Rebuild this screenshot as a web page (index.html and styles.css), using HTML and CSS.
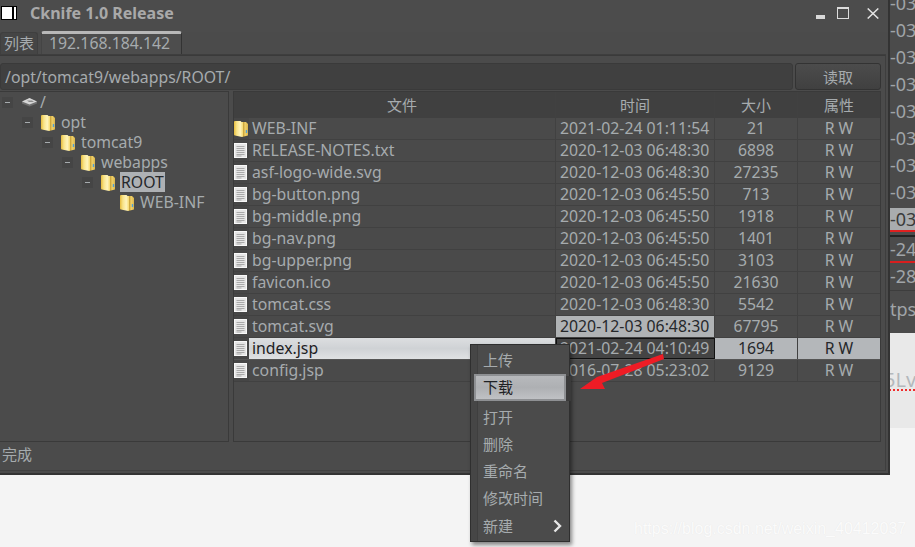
FILE: index.html
```html
<!DOCTYPE html>
<html lang="zh">
<head>
<meta charset="utf-8">
<title>Cknife 1.0 Release</title>
<link rel="stylesheet" href="styles.css">
</head>
<body>
<svg class="defs" width="0" height="0" aria-hidden="true">
  <defs>
    <linearGradient id="foldfill" x1="0" y1="0" x2="1" y2="0">
      <stop offset="0" stop-color="#e6bc3e"/>
      <stop offset=".2" stop-color="#f8e388"/>
      <stop offset=".45" stop-color="#fff4bd"/>
      <stop offset=".62" stop-color="#f7dd78"/>
      <stop offset=".66" stop-color="#c9a23a"/>
      <stop offset=".8" stop-color="#efd06a"/>
      <stop offset="1" stop-color="#dcb64c"/>
    </linearGradient>
    <symbol id="folder" viewBox="0 0 14 17">
      <path d="M1 1h5.500l1 1H12l2 2v11.500L8 17l-7-1.500Q0 15.300 0 14.500V2q0-1 1-1z" fill="url(#foldfill)"/>
      <path d="M11.800 10h1.400v3h-1.400z" fill="#4f9fd8"/>
    </symbol>
    <symbol id="doc" viewBox="0 0 13 15">
      <rect width="13" height="15" fill="#e6e6e6"/>
      <rect x=".5" y=".5" width="12" height="14" fill="none" stroke="#f8f8f8"/>
      <path d="M2.500 3.500h8M2.500 5.500h8M2.500 7.500h8M2.500 9.500h8M2.500 11.500h8M2.500 13h5" stroke="#aaaaaa" fill="none"/>
    </symbol>
    <symbol id="disk" viewBox="0 0 17 10">
      <path d="M8.500 1L16 4.500v2L8.500 9.500 1 6.500v-2z" fill="#6f6f6f"/>
      <path d="M8.500 1L16 4.500 8.500 7.500 1 4.500z" fill="#d6d6d6"/>
      <path d="M6 3.500h5l2 1.500H8z" fill="#8b8b8b"/>
    </symbol>
  </defs>
</svg>

<div class="behind">
  <div class="dump">
    <div class="dump-line dl-0">-03</div>
    <div class="dump-line">-03</div>
    <div class="dump-line">-03</div>
    <div class="dump-line">-03</div>
    <div class="dump-line">-03</div>
    <div class="dump-line">-03</div>
    <div class="dump-line">-03</div>
    <div class="dump-line">-03</div>
    <div class="dump-line dl-hl">-03</div>
    <div class="dump-line dl-red">-24</div>
    <div class="dump-line">-28</div>
    <div class="dump-tps">tps:</div>
  </div>
  <div class="page-white"><span class="squiggle">5Lv5</span></div>
</div>

<section class="window">
  <header class="titlebar">
    <span class="app-icon"></span>
    <span class="title">Cknife 1.0 Release</span>
    <span class="win-ctl">
      <svg class="ctl-min" width="9" height="4" viewBox="0 0 9 4"><rect width="9" height="4" fill="#d8d8d8"/></svg>
      <svg class="ctl-max" width="12" height="12" viewBox="0 0 12 12"><rect x=".5" y=".5" width="11" height="11" fill="none" stroke="#dcdcdc"/><rect x=".5" y=".5" width="11" height="1.500" fill="#dcdcdc"/></svg>
      <svg class="ctl-close" width="12" height="11" viewBox="0 0 12 11"><path d="M.7.5l10.600 10M11.300.5L.7 10.500" stroke="#e4e4e4" stroke-width="1.500" fill="none"/></svg>
    </span>
  </header>

  <nav class="tabs">
    <span class="tab">列表</span>
    <span class="tab active">192.168.184.142</span>
  </nav>

  <div class="tabpanel">
    <div class="address">
      <div class="path">/opt/tomcat9/webapps/ROOT/</div>
      <button class="read">读取</button>
    </div>
    <div class="split">
      <aside class="tree">
        <div class="node d0"><span class="tog"></span><svg class="ic-disk"><use href="#disk"/></svg><span class="label">/</span></div>
        <div class="node d1"><span class="tog"></span><svg class="ic-fold"><use href="#folder"/></svg><span class="label">opt</span></div>
        <div class="node d2"><span class="tog"></span><svg class="ic-fold"><use href="#folder"/></svg><span class="label">tomcat9</span></div>
        <div class="node d3"><span class="tog"></span><svg class="ic-fold"><use href="#folder"/></svg><span class="label">webapps</span></div>
        <div class="node d4"><span class="tog"></span><svg class="ic-fold"><use href="#folder"/></svg><span class="label sel">ROOT</span></div>
        <div class="node d5"><svg class="ic-fold"><use href="#folder"/></svg><span class="label">WEB-INF</span></div>
      </aside>
      <div class="table">
        <div class="row head"><span class="c-ic"></span><span class="c-name">文件</span><span class="c-time">时间</span><span class="c-size">大小</span><span class="c-attr">属性</span></div>
        <div class="row"><span class="c-ic"><svg class="t-fold"><use href="#folder"/></svg></span><span class="c-name">WEB-INF</span><span class="c-time">2021-02-24 01:11:54</span><span class="c-size">21</span><span class="c-attr">R W</span></div>
        <div class="row"><span class="c-ic"><svg class="t-doc"><use href="#doc"/></svg></span><span class="c-name">RELEASE-NOTES.txt</span><span class="c-time">2020-12-03 06:48:30</span><span class="c-size">6898</span><span class="c-attr">R W</span></div>
        <div class="row"><span class="c-ic"><svg class="t-doc"><use href="#doc"/></svg></span><span class="c-name">asf-logo-wide.svg</span><span class="c-time">2020-12-03 06:48:30</span><span class="c-size">27235</span><span class="c-attr">R W</span></div>
        <div class="row"><span class="c-ic"><svg class="t-doc"><use href="#doc"/></svg></span><span class="c-name">bg-button.png</span><span class="c-time">2020-12-03 06:45:50</span><span class="c-size">713</span><span class="c-attr">R W</span></div>
        <div class="row"><span class="c-ic"><svg class="t-doc"><use href="#doc"/></svg></span><span class="c-name">bg-middle.png</span><span class="c-time">2020-12-03 06:45:50</span><span class="c-size">1918</span><span class="c-attr">R W</span></div>
        <div class="row"><span class="c-ic"><svg class="t-doc"><use href="#doc"/></svg></span><span class="c-name">bg-nav.png</span><span class="c-time">2020-12-03 06:45:50</span><span class="c-size">1401</span><span class="c-attr">R W</span></div>
        <div class="row"><span class="c-ic"><svg class="t-doc"><use href="#doc"/></svg></span><span class="c-name">bg-upper.png</span><span class="c-time">2020-12-03 06:45:50</span><span class="c-size">3103</span><span class="c-attr">R W</span></div>
        <div class="row"><span class="c-ic"><svg class="t-doc"><use href="#doc"/></svg></span><span class="c-name">favicon.ico</span><span class="c-time">2020-12-03 06:45:50</span><span class="c-size">21630</span><span class="c-attr">R W</span></div>
        <div class="row"><span class="c-ic"><svg class="t-doc"><use href="#doc"/></svg></span><span class="c-name">tomcat.css</span><span class="c-time">2020-12-03 06:48:30</span><span class="c-size">5542</span><span class="c-attr">R W</span></div>
        <div class="row"><span class="c-ic"><svg class="t-doc"><use href="#doc"/></svg></span><span class="c-name">tomcat.svg</span><span class="c-time hover">2020-12-03 06:48:30</span><span class="c-size">67795</span><span class="c-attr">R W</span></div>
        <div class="row selected"><span class="c-ic"><svg class="t-doc"><use href="#doc"/></svg></span><span class="c-name">index.jsp</span><span class="c-time focus">2021-02-24 04:10:49</span><span class="c-size">1694</span><span class="c-attr">R W</span></div>
        <div class="row"><span class="c-ic"><svg class="t-doc"><use href="#doc"/></svg></span><span class="c-name">config.jsp</span><span class="c-time">2016-07-28 05:23:02</span><span class="c-size">9129</span><span class="c-attr">R W</span></div>
      </div>
    </div>
  </div>
  <footer class="status">完成</footer>
</section>

<ul class="menu">
  <li class="mi">上传</li>
  <li class="mi active">下载</li>
  <li class="mi gap">打开</li>
  <li class="mi">删除</li>
  <li class="mi">重命名</li>
  <li class="mi">修改时间</li>
  <li class="mi sub">新建<svg width="9" height="14" viewBox="0 0 9 14"><path d="M1.500 1.500L7 7l-5.500 5.500" fill="none" stroke="#e6e6e6" stroke-width="2.400"/></svg></li>
</ul>

<svg class="arrow" width="90" height="42" viewBox="0 0 90 42">
  <path d="M2 36L19 24 85 1l1 5-62 24 3 6z" fill="#ee1c25"/>
</svg>

<div class="watermark">https://blog.csdn.net/weixin_40412037</div>
</body>
</html>
```
FILE: styles.css
```css
* { box-sizing: border-box; }
html, body { margin: 0; height: 100%; }
body {
  position: relative;
  width: 915px;
  height: 547px;
  overflow: hidden;
  background: #f4f4f4;
  font-family: "Noto Sans", "Noto Sans CJK SC", sans-serif;
  font-size: 15.800px;
  color: #a6abae;
}
.defs { position: absolute; }

/* what is visible behind the window */
.behind {
  position: absolute;
  left: 889px;
  top: 0;
  width: 26px;
  height: 428px;
  overflow: hidden;
  display: flex;
  flex-direction: column;
}
.dump {
  height: 333px;
  background: #4b4b4b;
  font-size: 18px;
  color: #a0a4a8;
  flex: none;
}
.dump-line {
  height: 27px;
  line-height: 27px;
  white-space: nowrap;
  padding-left: 1px;
}
.dl-0 { margin-top: -10px; }
.dl-hl {
  height: 24px;
  margin-top: 2px;
  line-height: 22px;
  background: #a9acae;
  color: #3a3a3a;
  border-bottom: 2px solid #e02020;
}
.dl-red {
  height: 28px;
  margin-top: 3px;
  line-height: 24px;
  border-top: 2px solid #222;
  border-bottom: 2px solid #d81e1e;
}
.dump-tps {
  padding-top: 5px;
  padding-left: 1px;
  border-top: 1px solid #3d3d3d;
  line-height: 26px;
  white-space: nowrap;
}
.page-white {
  flex: 1;
  background: #e9e9e9;
  padding-top: 37px;
  font-size: 20px;
  color: #b4b8bc;
}
.squiggle {
  display: block;
  height: 21px;
  margin-left: -5px;
  line-height: 20px;
  white-space: nowrap;
  border-bottom: 2px dotted #f02c2c;
}

/* window */
.window {
  position: absolute;
  left: 0;
  top: 0;
  width: 890px;
  height: 475px;
  display: flex;
  flex-direction: column;
  background: #4b4b4b;
  border-right: 2px solid #333;
  border-bottom: 2px solid #333;
}
.titlebar {
  height: 32px;
  flex: none;
  display: flex;
  align-items: center;
  padding: 0 9px 6px 1px;
  background: #4c4c4c;
}
.app-icon {
  width: 16px;
  height: 14px;
  background: linear-gradient(90deg, #fff 0 10px, #000 10px 12px, #fff 12px 14px, #000 14px);
  border: 1px solid #000;
  flex: none;
}
.title {
  margin-left: 13px;
  font-weight: 700;
  font-size: 16px;
  color: #a9a9a9;
}
.win-ctl {
  margin-left: auto;
  display: flex;
  align-items: flex-end;
  gap: 12px;
}
.win-ctl svg { display: block; }
.win-ctl .ctl-close { margin-left: 6px; }
.tabs {
  height: 23px;
  flex: none;
  display: flex;
  align-items: flex-end;
  gap: 1px;
  margin-right: 2px;
  border-bottom: 1px solid #3e3e3e;
}
.tab {
  height: 22px;
  line-height: 21px;
  padding: 0 3px;
  border: 1px solid #3f3f3f;
  border-bottom: none;
  border-radius: 3px 3px 0 0;
  background: #454545;
  font-size: 15px;
}
.tab.active {
  height: 23px;
  width: 141px;
  margin-left: 2px;
  padding: 0 7px;
  line-height: 18px;
  font-size: 15.800px;
  background: #4d4d4d;
  border-top: 3px solid #b8b8b8;
  border-color: #b8b8b8 #333 #4d4d4d #444;
}
.tabpanel {
  flex: none;
  height: 387px;
  margin-right: 2px;
  display: flex;
  flex-direction: column;
  border-top: 1px solid #3a3a3a;
  border-right: 1px solid #3e3e3e;
  padding: 7px 4px 0 0;
}
.address {
  display: flex;
  height: 28px;
  gap: 2px;
  flex: none;
}
.path {
  flex: 1;
  height: 27px;
  line-height: 26px;
  padding-left: 4px;
  background: #404040;
  border: 1px solid #3a3a3a;
  border-radius: 3px;
}
.read {
  width: 86px;
  flex: none;
  height: 27px;
  background: linear-gradient(#4c4c4c, #404040);
  border: 1px solid #333;
  border-radius: 3px;
  color: #a6abae;
  font: inherit;
  font-size: 15px;
  padding: 0;
}
.split {
  flex: 1;
  display: flex;
  gap: 4px;
}
.tree {
  flex: none;
  width: 229px;
  height: 351px;
  border: 1px solid #3a3a3a;
  border-left: none;
}
.node {
  height: 20px;
  display: flex;
  align-items: center;
}
.d1 { padding-left: 20px; }
.d2 { padding-left: 40px; }
.d3 { padding-left: 60px; }
.d4 { padding-left: 80px; }
.d5 { padding-left: 120px; }
.tog {
  width: 11px;
  height: 11px;
  margin-left: 2px;
  margin-right: 8px;
  flex: none;
  background: linear-gradient(#a6abae, #a6abae) center / 5px 1px no-repeat #454545;
}
.ic-disk { width: 17px; height: 10px; margin-right: -4px; flex: none; }
.ic-fold { width: 14px; height: 17px; flex: none; }
.node .label { margin-left: 6px; line-height: 20px; }
.node .sel { background: #aeb1b4; color: #26282b; padding: 0 1px; margin-left: 5px; }
.table {
  flex: none;
  width: 648px;
  height: 351px;
  border: 1px solid #3a3a3a;
}
.row {
  display: flex;
  height: 22px;
  line-height: 21px;
  border-bottom: 1px solid #414141;
}
.row.head {
  height: 26px;
  line-height: 27px;
  background: #404040;
  border-bottom: none;
  text-align: center;
  font-size: 15px;
}
.row > span { display: block; white-space: nowrap; }
.row > .c-ic { width: 15px; flex: none; background: #464646; display: flex; align-items: center; }
.c-name { width: 307px; flex: none; padding-left: 3px; border-right: 1px solid #414141; background: #4a4a4a; }
.c-time { width: 159px; flex: none; padding-left: 4px; border-right: 1px solid #414141; }
.c-size { width: 83px; flex: none; text-align: center; border-right: 1px solid #414141; }
.c-attr { width: 82px; flex: none; text-align: center; }
.head .c-name, .head .c-time, .head .c-size { text-align: center; padding: 0; background: none; }
.row.head > .c-ic { background: none; }
.t-fold { width: 14px; height: 17px; display: block; }
.t-doc { width: 13px; height: 15px; display: block; }
.hover { background: #b0b3b5; color: #26282b; }
.selected { border-bottom-color: #555; }
.selected .c-name { background: linear-gradient(#dcdee0, #cfd2d5 50%, #dfe1e3); color: #1e2124; }
.selected .c-size, .selected .c-attr { background: #b4b7ba; color: #26282b; }
.selected .c-time.focus { border: 1px solid #111; padding-left: 3px; line-height: 19px; background: #444; }

.status {
  flex: none;
  height: 29px;
  margin-right: 2px;
  line-height: 25px;
  padding-left: 2px;
  border-bottom: 1px solid #404040;
  border-right: 1px solid #3e3e3e;
  font-size: 15px;
}

/* context menu */
.menu {
  position: absolute;
  left: 470px;
  top: 344px;
  width: 100px;
  height: 198px;
  margin: 0;
  padding: 2px 3px;
  list-style: none;
  background: linear-gradient(90deg, #464646 6px, #3f3f3f 6px 7px, #4b4b4b 7px);
  border: 1px solid #2f2f2f;
  box-shadow: 2px 3px 4px rgba(0, 0, 0, .45);
  font-size: 15px;
}
.mi {
  height: 27px;
  line-height: 26px;
  padding-left: 9px;
}
.mi.active {
  background: linear-gradient(#b7b9bc, #aeb0b3 50%, #bfc1c4);
  border: 2px solid #8e9093;
  padding-left: 7px;
  line-height: 23px;
  color: #1f2225;
  box-shadow: 6px 1px 0 -1px #3a3a3a;
}
.mi.gap { margin-top: 3px; }
.mi.sub { display: flex; align-items: center; justify-content: space-between; padding-right: 4px; }

.arrow { position: absolute; left: 578px; top: 353px; }
.watermark {
  position: absolute;
  left: 634px;
  top: 520px;
  font-family: "Liberation Sans", sans-serif;
  font-size: 16px;
  color: #fbfbfb;
  text-shadow: 0 0 1px #e4e4e4;
  white-space: nowrap;
}
```
